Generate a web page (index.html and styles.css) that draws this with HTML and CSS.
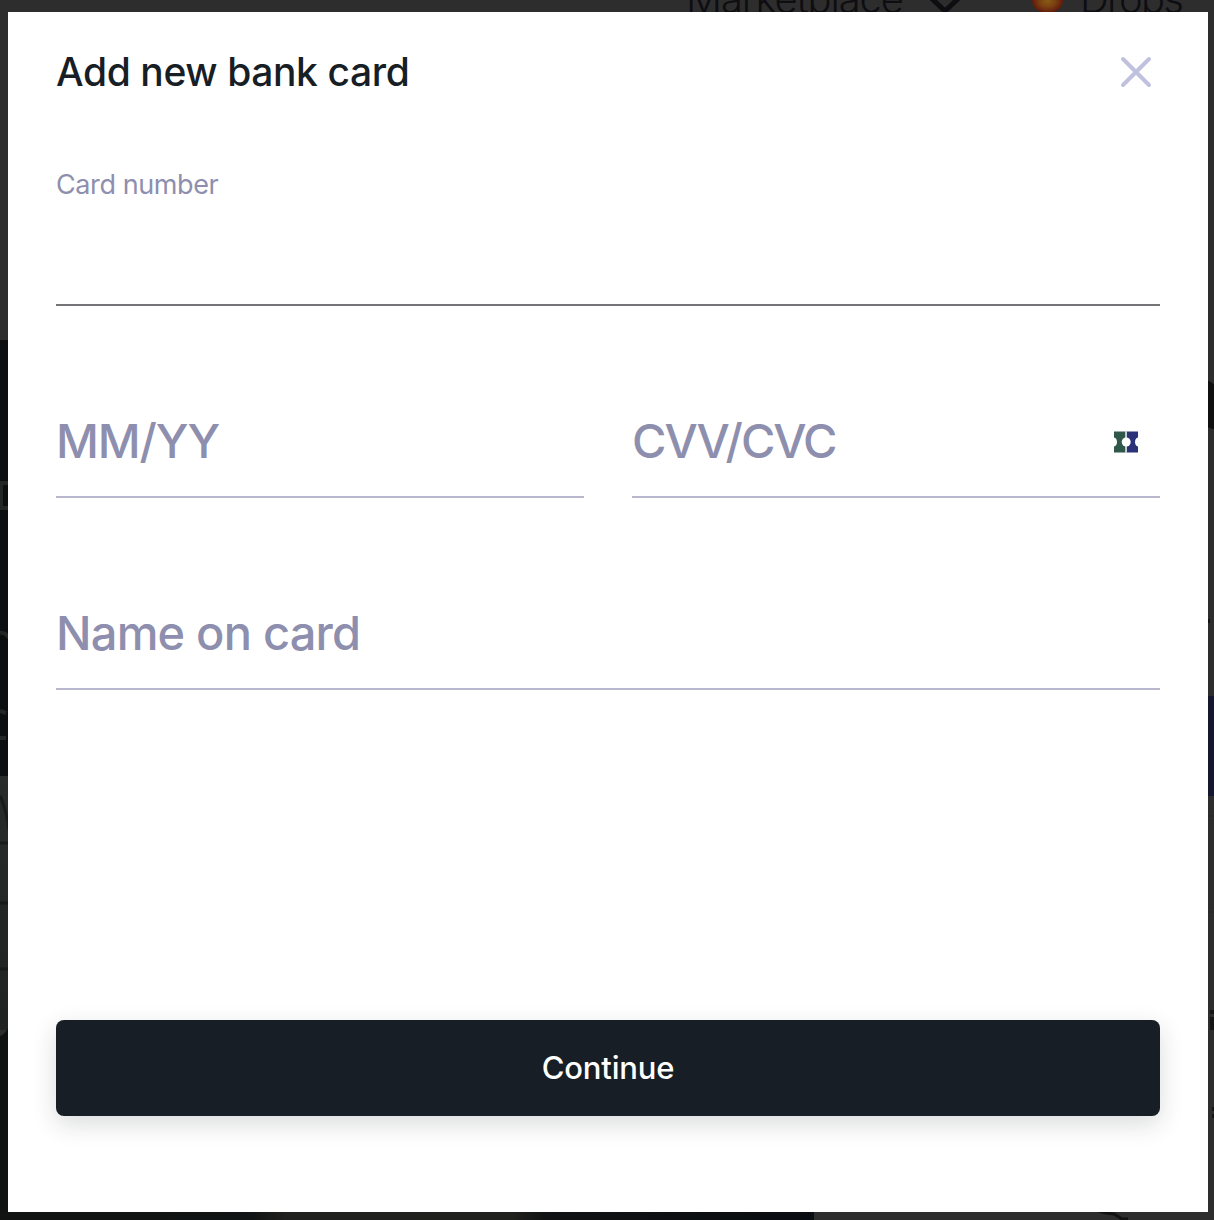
FILE: index.html
```html
<!DOCTYPE html>
<html lang="en">
<head>
<meta charset="utf-8">
<title>Add new bank card</title>
<link rel="stylesheet" href="styles.css">
</head>
<body>
<svg class="backdrop" width="1214" height="1220" viewBox="0 0 1214 1220" aria-hidden="true">
  <defs>
    <linearGradient id="shade" x1="0" x2="0" y1="0" y2="1"><stop offset="0" stop-color="#2a2b2b"/><stop offset="1" stop-color="#202322"/></linearGradient>
    <linearGradient id="floor"><stop offset="0" stop-color="#111212"/><stop offset=".31" stop-color="#111414"/><stop offset=".35" stop-color="#20201e"/><stop offset=".63" stop-color="#20201d"/><stop offset=".67" stop-color="#101213"/><stop offset="1" stop-color="#090c10"/></linearGradient>
    <radialGradient id="flame"><stop offset="0" stop-color="#875c14"/><stop offset=".5" stop-color="#7c4012"/><stop offset="1" stop-color="#5e1b0c"/></radialGradient>
  </defs>
  <rect width="1214" height="1220" fill="#2d2d2d"/>
  <text class="nav-text" x="686" y="13" textLength="218">Marketplace</text>
  <path d="M928-5 945 11 962-5" fill="none" stroke="#0e0d11" stroke-width="5"/>
  <ellipse cx="1047.500" cy="1" rx="15.500" ry="12" fill="url(#flame)"/>
  <text class="nav-text" x="1080" y="13" textLength="104">Drops</text>
  <rect y="340" width="10" height="436" fill="#0c0e10"/>
  <path d="M0 483H10M0 508H10M1 483V508" stroke="#252727" stroke-width="4" fill="none"/>
  <path d="M0 633Q5 632 9 638M0 711L6 713M0 738H6" stroke="#252727" stroke-width="4" fill="none"/>
  <rect y="776" width="10" height="254" fill="url(#shade)"/>
  <path d="M0 796Q6 808 9 830M0 843H10M0 903H10M0 969H10" stroke="#191b1b" stroke-width="3" fill="none"/>
  <path d="M0 1036Q6 1034 10 1024V1220H0Z" fill="#101111"/>
  <rect y="1210" width="814" height="10" fill="url(#floor)"/>
  <path d="M1096 1210l10 3 8 1 8 5h6" stroke="#111" stroke-width="3" fill="none"/>
  <path d="M1206 380Q1212 382 1216 386V429Q1211 430 1206 426Z" fill="#101010"/>
  <rect x="1208" y="696" width="6" height="100" fill="#14172d"/>
  <path d="M1208 816h6M1208 912h6" stroke="#29292a" stroke-width="2"/>
  <path d="M1208 621h2M1210 1012h4M1212 1017v13M1212 1109h2M1212 1116h2" stroke="#151515" stroke-width="4"/>
</svg>
<main class="dialog">
  <header class="header">
    <h1 class="title">Add new bank card</h1>
    <button class="close" aria-label="Close"><svg width="32" height="32" viewBox="0 0 32 32"><path d="M3 3 29 29M29 3 3 29" fill="none" stroke="#bfc1de" stroke-width="4" stroke-linecap="round"/></svg></button>
  </header>
  <form class="form">
    <div class="field field-active"><span class="label">Card number</span></div>
    <div class="row">
      <div class="field"><span class="placeholder date">MM/YY</span></div>
      <div class="field"><span class="placeholder code">CVV/CVC</span>
        <svg class="badge" width="24" height="22" viewBox="0 0 24 22"><path d="M0 .5H11.500V21.500H0V15.500C4 15 4 7 0 6.500Z" fill="#30584a"/><path d="M12.500 .5H24V6.500C20 7 20 15 24 15.500V21.500H12.500Z" fill="#2b3278"/><path d="M11.300 .5h1.700v21h-1.700z" fill="#cccfda"/><circle cx="12.200" cy="11" r="4.500" fill="#fff"/></svg>
      </div>
    </div>
    <div class="field"><span class="placeholder name">Name on card</span></div>
    <button class="continue" type="button"><span>Continue</span></button>
  </form>
</main>
</body>
</html>
```

FILE: styles.css
```css
* { box-sizing: border-box; }
body { margin: 0; padding: 12px 6px 8px 8px; height: 1220px; overflow: hidden; font-family: Inter, "Liberation Sans", sans-serif; }
.backdrop { position: absolute; left: 0; top: 0; z-index: -1; }
.nav-text { font-size: 40px; font-weight: 300; fill: #0e0d11; }
.dialog { height: 1200px; padding: 36px 48px 96px; background: #fff; display: flex; flex-direction: column; }
.header { display: flex; align-items: center; justify-content: space-between; height: 48px; }
.title { margin: 0; font-size: 39px; line-height: 48px; font-weight: 500; letter-spacing: -0.4px; color: #171e25; white-space: nowrap; }
.close { display: flex; padding: 0; margin-right: 8px; border: 0; background: none; }
.form { display: flex; flex-direction: column; flex: 1; padding-top: 66px; }
.field { display: flex; align-items: center; justify-content: space-between; flex: 1; height: 112px; padding-top: 2px; border-bottom: 2px solid #b7b7ce; color: #8e8fae; }
.field-active { flex: none; height: 144px; padding-top: 0; align-items: flex-start; border-color: #737378; }
.form > .field:not(.field-active) { flex: none; margin-top: 80px; }
.row { display: flex; gap: 48px; margin-top: 80px; }
.label { font-size: 27px; line-height: 46px; letter-spacing: -0.4px; }
.placeholder { padding-bottom: 2px; font-size: 47px; font-weight: 500; line-height: 58px; white-space: nowrap; }
.date { letter-spacing: -1.1px; }
.code { letter-spacing: -2px; }
.name { letter-spacing: -0.8px; }
.badge { margin-right: 22px; }
.continue { margin-top: auto; height: 96px; padding-bottom: 2px; border: 0; border-radius: 8px; background: #171e25; box-shadow: 0 8px 24px rgba(23, 30, 37, .16); color: #fff; font: 500 31px/40px Inter, "Liberation Sans", sans-serif; letter-spacing: -0.2px; }
```
